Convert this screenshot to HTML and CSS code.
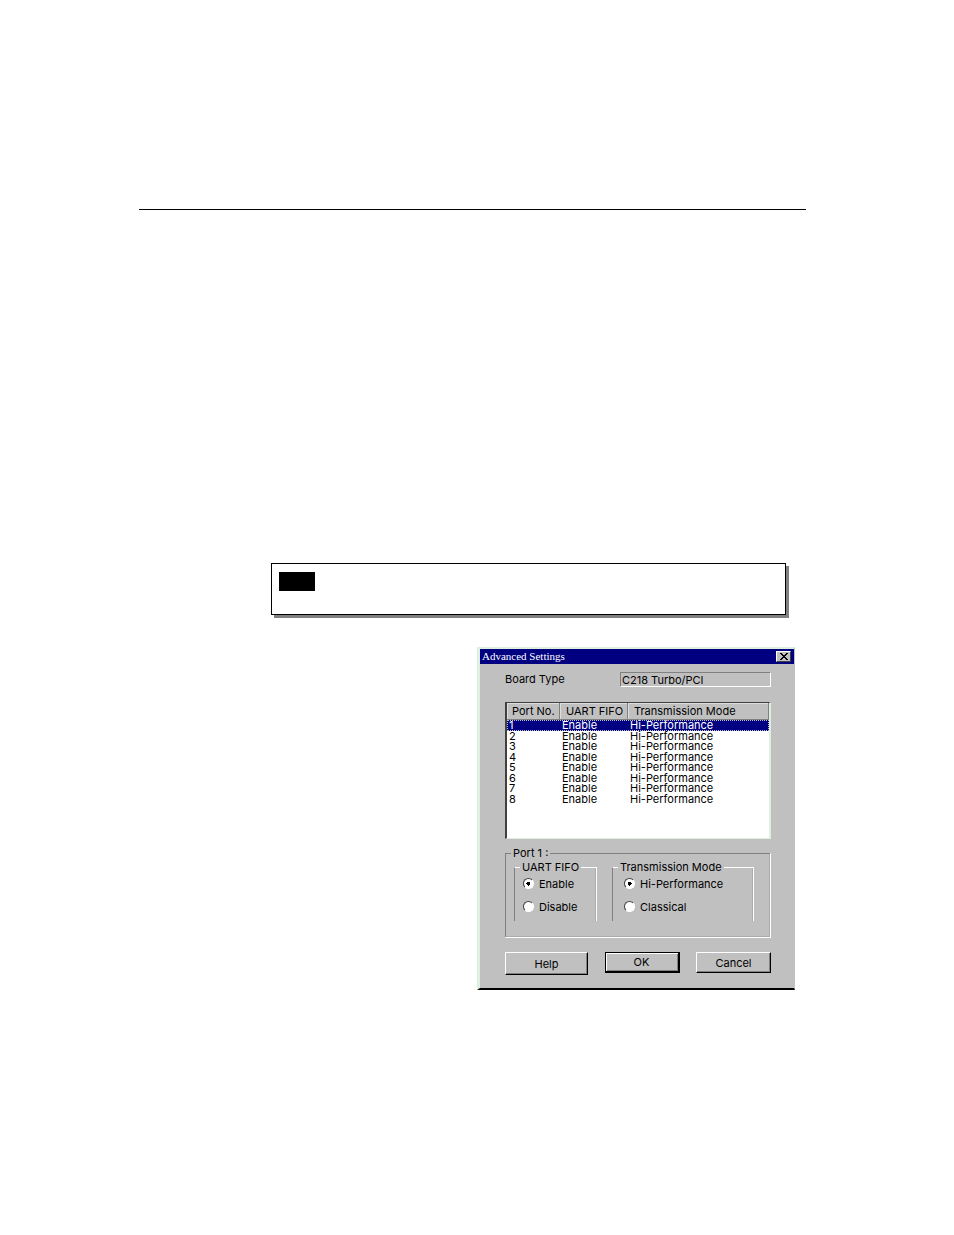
FILE: index.html
```html
<!DOCTYPE html>
<html lang="en">
<head>
    <meta charset="UTF-8">
    <meta name="viewport" content="width=device-width, initial-scale=1.0">
    <title>Advanced Settings</title>
    <link rel="stylesheet" href="styles.css">
</head>
<body>

    <main class="page">
        <hr class="rule">

        <div class="note">
            <div class="note-tag"></div>
        </div>

        <form class="dialog">
            <div class="title-bar">
                <h1>Advanced Settings</h1>
                <button type="button" class="close" aria-label="Close">
                    <svg width="8" height="7" viewBox="0 0 8 7" shape-rendering="crispEdges">
                        <path d="M0 0h2v1h1v1h2v-1h1v-1h2v1h-1v1h-1v1h-1v1h1v1h1v1h1v1h-2v-1h-1v-1h-2v1h-1v1h-2v-1h1v-1h1v-1h1v-1h-1v-1h-1v-1h-1z"/>
                    </svg>
                </button>
            </div>

            <div class="dialog-body">
                <div class="board">
                    <label for="board">Board Type</label>
                    <input type="text" id="board" class="board-type" value="C218 Turbo/PCI" readonly>
                </div>

                <div class="port-list">
                    <table>
                        <thead>
                            <tr>
                                <th class="col-port">Port No.</th>
                                <th class="col-fifo">UART FIFO</th>
                                <th>Transmission Mode</th>
                            </tr>
                        </thead>
                        <tbody>
                            <tr class="selected"><td>1</td><td>Enable</td><td>Hi-Performance</td></tr>
                            <tr><td>2</td><td>Enable</td><td>Hi-Performance</td></tr>
                            <tr><td>3</td><td>Enable</td><td>Hi-Performance</td></tr>
                            <tr><td>4</td><td>Enable</td><td>Hi-Performance</td></tr>
                            <tr><td>5</td><td>Enable</td><td>Hi-Performance</td></tr>
                            <tr><td>6</td><td>Enable</td><td>Hi-Performance</td></tr>
                            <tr><td>7</td><td>Enable</td><td>Hi-Performance</td></tr>
                            <tr><td>8</td><td>Enable</td><td>Hi-Performance</td></tr>
                        </tbody>
                    </table>
                </div>

                <fieldset class="group port">
                    <legend>Port 1 :</legend>
                    <div class="options">
                        <fieldset class="group option fifo">
                            <legend>UART FIFO</legend>
                            <label><input type="radio" name="fifo" checked>Enable</label>
                            <label><input type="radio" name="fifo">Disable</label>
                        </fieldset>
                        <fieldset class="group option mode">
                            <legend>Transmission Mode</legend>
                            <label><input type="radio" name="mode" checked>Hi-Performance</label>
                            <label><input type="radio" name="mode">Classical</label>
                        </fieldset>
                    </div>
                </fieldset>

                <div class="buttons">
                    <button type="button" class="btn help">Help</button>
                    <button type="submit" class="btn default">OK</button>
                    <button type="button" class="btn">Cancel</button>
                </div>
            </div>
        </form>
    </main>

</body>
</html>
```
FILE: styles.css
```css
* {
    box-sizing: border-box;
}
body {
    margin: 0;
    background: #fff;
    color: #000;
    font-family: Inter, "Liberation Sans", Arial, sans-serif;
    font-size: 11px;
    line-height: 14px;
}
.page {
    padding: 209px 148px 200px 139px;
}
.rule {
    margin: 0;
    border: 0;
    border-top: 1px solid #000;
}
.note {
    min-height: 52px;
    margin: 353px 20px 0 132px;
    padding: 8px 7px;
    border: 1px solid #000;
    box-shadow: 3px 3px 0 #808080;
}
.note-tag {
    width: 36px;
    height: 19px;
    background: #000;
}

/* dialog window */
.dialog {
    width: 318px;
    margin: 32px 11px 0 auto;
    border: 2px solid #e0f0e0;
    border-width: 2px 1px 2px 3px;
    border-right-color: #c0c0c0;
    border-bottom-color: #000;
    background: #c0c0c0;
}
.title-bar {
    display: flex;
    align-items: center;
    justify-content: space-between;
    height: 15px;
    padding: 0 3px 0 2px;
    background: #000080;
}
.title-bar h1 {
    margin: 0;
    color: #fff;
    font-family: "Liberation Serif", "Times New Roman", serif;
    font-size: 11px;
    line-height: 13px;
    font-weight: normal;
}
.close {
    display: flex;
    align-items: center;
    justify-content: center;
    width: 15px;
    height: 11px;
    padding: 0;
    border: 1px solid #fff;
    border-right-color: #404040;
    border-bottom-color: #404040;
    background: #c0c0c0;
}
.dialog-body {
    padding: 8px 23px 13px 25px;
}
.board {
    display: flex;
    justify-content: space-between;
    height: 15px;
    align-items: center;
}
.board label {
    padding-bottom: 2px;
}
.board-type {
    width: 151px;
    height: 15px;
    padding: 0 1px;
    border: 1px solid #808080;
    border-right-color: #fff;
    border-bottom-color: #fff;
    background: #c0c0c0;
    color: #000;
    font: inherit;
}

/* port table */
.port-list {
    height: 137px;
    margin-top: 15px;
    border: 2px solid #dfefdf;
    border-width: 1px 2px 1px 2px;
    border-top-color: #404040;
    border-left-color: #404040;
    background: #fff;
}
table {
    width: 100%;
    height: 101px;
    table-layout: fixed;
    border-collapse: separate;
    border-spacing: 0;
    line-height: 10px;
}
th {
    height: 17px;
    padding: 0 0 0 6px;
    border-right: 1px solid #808080;
    border-bottom: 1px solid #808080;
    box-shadow: inset 1px 1px 0 #dfdfdf;
    background: #c0c0c0;
    font-weight: normal;
    text-align: left;
    white-space: nowrap;
}
.col-port {
    width: 53px;
    padding-left: 5px;
}
.col-fifo {
    width: 68px;
}
td {
    padding: 0 0 0 2px;
}
.selected td {
    background: #000080;
    color: #fff;
}
.selected {
    outline: 1px dotted #c0c0c0;
    outline-offset: -1px;
}

/* group boxes */
.group {
    min-width: 0;
    margin: 0;
    padding: 0;
    border: 1px solid #808080;
}
.group legend {
    padding: 0 2px;
}
.port {
    height: 92px;
    margin-top: 7px;
    border-right: 2px groove #fff;
    border-bottom: 2px groove #fff;
}
.port > legend {
    margin-left: 5px;
}
.options {
    display: flex;
    justify-content: space-between;
    padding: 0 15px 0 8px;
}
.option {
    height: 61px;
    border-color: #fff;
    border-left-color: #808080;
    border-bottom: 0;
    border-right: 2px groove #fff;
}
.option legend {
    margin-left: 5px;
}
.fifo {
    width: 83px;
}
.mode {
    width: 142px;
}
.option label {
    display: flex;
    align-items: center;
    gap: 5px;
    height: 23px;
    padding-left: 8px;
}
.mode label {
    padding-left: 11px;
}
.option legend + label {
    margin-top: -2px;
}
input[type="radio"] {
    appearance: none;
    width: 11px;
    height: 11px;
    margin: 0;
    border: 1px solid #fff;
    border-top-color: #404040;
    border-left-color: #404040;
    border-radius: 50%;
    background: #fff;
}
input[type="radio"]:checked {
    background: radial-gradient(circle, #000 0 2px, #fff 2px);
}

/* button row */
.buttons {
    display: flex;
    justify-content: space-between;
    align-items: flex-start;
    margin-top: 14px;
}
.btn {
    width: 75px;
    height: 21px;
    padding: 0;
    border: 1px solid #fff;
    border-right-color: #000;
    border-bottom-color: #000;
    box-shadow: inset -1px -1px 0 #808080;
    background: #c0c0c0;
    color: #000;
    font: inherit;
}
.help {
    width: 83px;
    height: 23px;
}
.default {
    border-color: #000;
    border-width: 1px 2px 2px 1px;
    box-shadow: inset 1px 1px 0 #fff, inset -1px -1px 0 #808080;
}
```
